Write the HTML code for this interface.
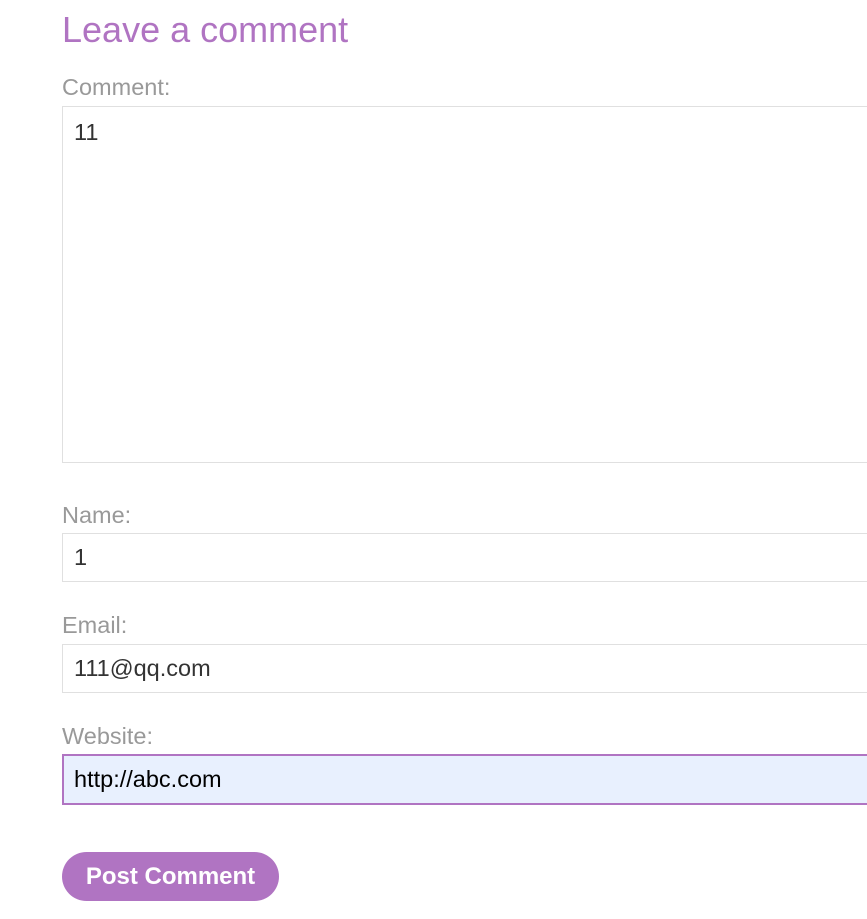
<!DOCTYPE html>
<html><head><style>
body{margin:0;width:867px;height:919px;overflow:hidden;background:#fff;font-family:"Liberation Sans",Arial,sans-serif;position:relative}
.a{position:absolute;left:62px}
h1{position:absolute;left:62px;top:9px;margin:0;font-weight:normal;font-size:36px;color:#b074c2;line-height:42px}
.l{font-size:23.5px;color:#999;line-height:26px}
.b{border:1px solid #e0e0e0;box-sizing:border-box;width:820px;background:#fff;font-size:23.5px;color:#333;padding-left:11px}
</style></head><body>
<h1>Leave a comment</h1>
<div class="a l" style="top:74px">Comment:</div>
<div class="a b" style="top:106px;height:357px;padding-top:12px;line-height:26px">11</div>
<div class="a l" style="top:502px">Name:</div>
<div class="a b" style="top:533px;height:49px;line-height:47px">1</div>
<div class="a l" style="top:612px">Email:</div>
<div class="a b" style="top:644px;height:49px;line-height:47px">111@qq.com</div>
<div class="a l" style="top:723px">Website:</div>
<div class="a b" style="top:754px;height:51px;line-height:47px;border:2px solid #b074c2;background:#e8f0fe;color:#000;padding-left:10px">http://abc.com</div>
<div class="a" style="top:852px;width:217px;height:49px;border-radius:25px;background:#b074c2;color:#fff;font-weight:bold;font-size:24px;line-height:49px;text-align:center">Post Comment</div>
</body></html>
